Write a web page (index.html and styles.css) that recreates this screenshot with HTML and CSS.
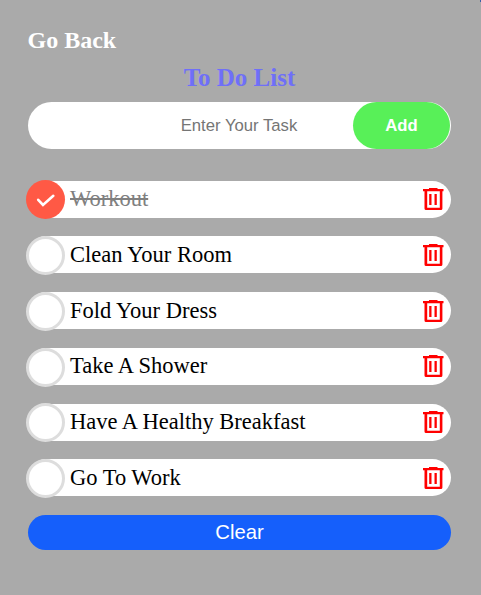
FILE: index.html
```html
<!DOCTYPE html>
<html lang="en">
<head>
<meta charset="utf-8">
<title>To Do List</title>
<link rel="stylesheet" href="styles.css">
</head>
<body>
<svg class="sprite" aria-hidden="true">
  <symbol id="trash" viewBox="0 0 21 22">
    <path d="M6 0h8.500v1.200H6zM0 1h20.500v2.200H0z"/>
    <path fill-rule="evenodd" d="M1.500 3H19.400v17.500q0 1.500-1.500 1.500H3q-1.500 0-1.500-1.500zM4.200 3.100v16.700h12.600V3.100z"/>
    <path d="M6.200 6h2.300v11H6.200zM11.500 6h2.300v11h-2.300z"/>
  </symbol>
  <symbol id="check" viewBox="0 0 39 39">
    <path d="M12.200 19.800l4.800 5.200L27.300 15.800" fill="none" stroke="#fff" stroke-width="2.600" stroke-linecap="round"/>
  </symbol>
</svg>
<main class="todo">
  <a class="back">Go Back</a>
  <h1 class="title">To Do List</h1>
  <form class="entry">
    <input class="field" type="text" placeholder="Enter Your Task">
    <button class="add" type="button">Add</button>
  </form>
  <ul class="list">
    <li class="item done"><span class="mark"><svg><use href="#check"/></svg></span><span class="label">Workout</span><svg class="trash"><use href="#trash"/></svg></li>
    <li class="item"><span class="mark"></span><span class="label">Clean Your Room</span><svg class="trash"><use href="#trash"/></svg></li>
    <li class="item"><span class="mark"></span><span class="label">Fold Your Dress</span><svg class="trash"><use href="#trash"/></svg></li>
    <li class="item"><span class="mark"></span><span class="label">Take A Shower</span><svg class="trash"><use href="#trash"/></svg></li>
    <li class="item"><span class="mark"></span><span class="label">Have A Healthy Breakfast</span><svg class="trash"><use href="#trash"/></svg></li>
    <li class="item"><span class="mark"></span><span class="label">Go To Work</span><svg class="trash"><use href="#trash"/></svg></li>
  </ul>
  <button class="clear" type="button">Clear</button>
</main>
</body>
</html>
```
FILE: styles.css
```css
* { box-sizing: border-box; }

body {
  margin: 0;
  background: #aaa;
  font-family: "Liberation Serif", "Times New Roman", serif;
}

body::after {
  content: "";
  position: absolute;
  top: 0;
  right: 0;
  width: 1px;
  height: 2px;
  background: #3a5fa8;
}

.sprite {
  position: absolute;
  width: 0;
  height: 0;
}

.todo {
  display: flex;
  flex-direction: column;
  height: 595px;
  padding: 26px 30px 0 28px;
}

.back {
  margin-left: -0.5px;
  color: #fff;
  font-size: 24px;
  font-weight: bold;
  line-height: 28px;
}

.title {
  margin: 9px 0 0;
  color: #6f6ff8;
  font-size: 25px;
  line-height: 29px;
  text-align: center;
}

.entry {
  display: flex;
  height: 47px;
  margin-top: 10px;
  padding-right: 1px;
  border-radius: 24px;
  background: #fff;
}

.field {
  flex: 1;
  min-width: 0;
  padding: 0 0 0 97px;
  border: 0;
  background: none;
  font: 16.700px "Liberation Sans", Arial, sans-serif;
  text-align: center;
}

.field::placeholder { color: #757575; }

.add {
  width: 97px;
  padding: 0;
  border: 0;
  border-radius: 24px;
  background: #58f058;
  color: #fff;
  font: bold 16.700px "Liberation Sans", Arial, sans-serif;
}

.list {
  display: flex;
  flex-direction: column;
  gap: 18.750px;
  margin: 31.600px 0 0;
  padding: 0;
  list-style: none;
}

.item {
  display: flex;
  align-items: center;
  height: 37px;
  padding-right: 7px;
  border-radius: 19px;
  background: #fff;
  font-size: 22.500px;
}

.mark {
  flex: none;
  width: 39px;
  height: 39px;
  margin: 1.400px 5px 0 -2px;
  border: 3px solid #ddd;
  border-radius: 50%;
  background: #fff;
}

.mark svg {
  display: block;
  width: 39px;
  height: 39px;
}

.label {
  flex: 1;
  padding-bottom: 1px;
  line-height: 27px;
}

.done .mark {
  border: 0;
  background: #ff5945;
}

.done .label {
  color: #808080;
  text-decoration: line-through;
}

.trash {
  width: 21px;
  height: 22px;
  fill: #f00;
}

.clear {
  height: 35px;
  margin-top: 18.600px;
  padding: 0;
  border: 0;
  border-radius: 18px;
  background: #155ffb;
  color: #fff;
  font: 20.300px "Liberation Sans", Arial, sans-serif;
}
```
